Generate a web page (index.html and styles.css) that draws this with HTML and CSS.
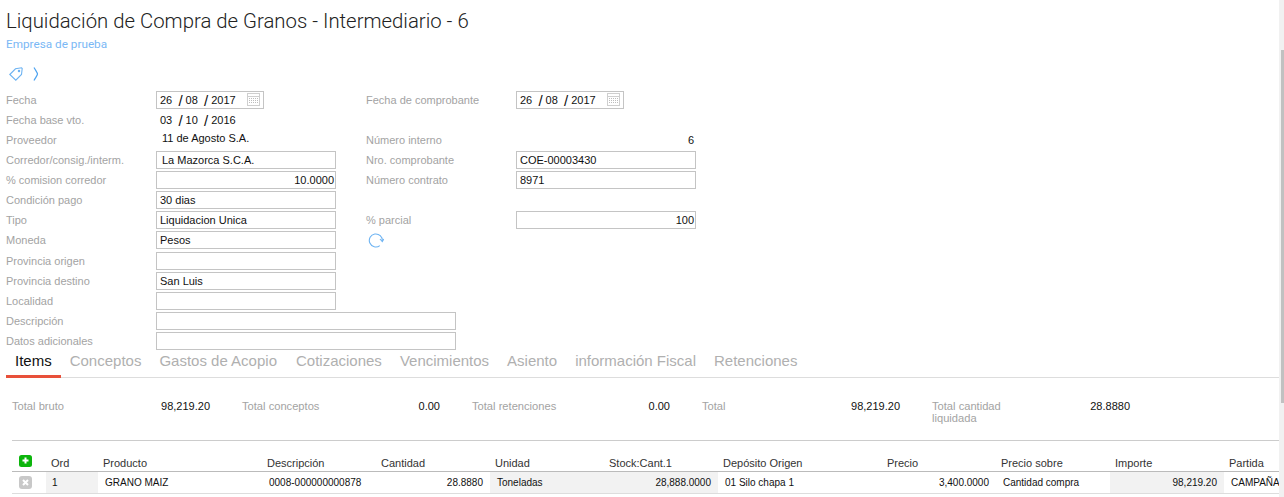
FILE: index.html
```html
<!DOCTYPE html>
<html lang="es">
<head>
<meta charset="utf-8">
<title>Liquidación de Compra de Granos</title>
<link rel="stylesheet" href="styles.css">
</head>
<body>
<div class="page">
  <header class="head">
    <h1 class="title">Liquidación de Compra de Granos - Intermediario - 6</h1>
    <div class="company">Empresa de prueba</div>
    <div class="tools">
      <svg class="ico" width="14" height="14" viewBox="0 0 14 14" fill="none" stroke="#6db3f2" stroke-width="1.1"><path d="M.8 7.500 6.500 1.800 12.500.8 13.200 1.500 12.500 7.500 6.800 13.200Z"/><circle cx="10" cy="4" r=".7"/></svg>
      <svg class="ico" width="6" height="14" viewBox="0 0 6 14" fill="none" stroke="#4da3f0" stroke-width="1.2"><path d="M1 .5C3 4 4.500 6 4.500 7S3 10 1 13.500"/></svg>
    </div>
  </header>
  <section class="form">
    <div class="lbl">Fecha</div>
    <div class="date box"><span>26</span><i>/</i><span>08</span><i>/</i><span>2017</span><svg class="cal" width="13" height="13" viewBox="0 0 13 13"><rect x=".5" y=".5" width="12" height="12" fill="#fff" stroke="#cfcfcf"/><path d="M.5 3.500H12.500" stroke="#cfcfcf"/><path d="M2 5.500h9M2 7.500h9M2 9.500h9" stroke="#bdbdbd" stroke-dasharray="1 1"/></svg></div>
    <div class="lbl c2">Fecha de comprobante</div>
    <div class="date box"><span>26</span><i>/</i><span>08</span><i>/</i><span>2017</span><svg class="cal" width="13" height="13" viewBox="0 0 13 13"><rect x=".5" y=".5" width="12" height="12" fill="#fff" stroke="#cfcfcf"/><path d="M.5 3.500H12.500" stroke="#cfcfcf"/><path d="M2 5.500h9M2 7.500h9M2 9.500h9" stroke="#bdbdbd" stroke-dasharray="1 1"/></svg></div>

    <div class="lbl">Fecha base vto.</div>
    <div class="date plain"><span>03</span><i>/</i><span>10</span><i>/</i><span>2016</span></div>
    <div class="skip"></div>

    <div class="lbl">Proveedor</div>
    <div class="static">11 de Agosto S.A.</div>
    <div class="lbl c2">Número interno</div>
    <div class="num">6</div>

    <div class="lbl">Corredor/consig./interm.</div>
    <div class="box txt ind">La Mazorca S.C.A.</div>
    <div class="lbl c2">Nro. comprobante</div>
    <div class="box txt">COE-00003430</div>

    <div class="lbl">% comision corredor</div>
    <div class="box txt right">10.0000</div>
    <div class="lbl c2">Número contrato</div>
    <div class="box txt">8971</div>

    <div class="lbl">Condición pago</div>
    <div class="box txt">30 dias</div>
    <div class="skip"></div>

    <div class="lbl">Tipo</div>
    <div class="box txt">Liquidacion Unica</div>
    <div class="lbl c2">% parcial</div>
    <div class="box txt right">100</div>

    <div class="lbl">Moneda</div>
    <div class="box txt">Pesos</div>
    <div class="refresh"><svg width="16" height="15" viewBox="0 0 16 15" fill="none" stroke="#6db3f2" stroke-width="1.1"><path d="M11.800 12.600A6.500 6.500 0 1 1 14.300 8"/><path d="M12 6 14.300 8.500 15.900 6"/></svg></div>

    <div class="lbl">Provincia origen</div>
    <div class="box txt"></div>
    <div class="skip"></div>

    <div class="lbl">Provincia destino</div>
    <div class="box txt">San Luis</div>
    <div class="skip"></div>

    <div class="lbl">Localidad</div>
    <div class="box txt"></div>
    <div class="skip"></div>

    <div class="lbl">Descripción</div>
    <div class="box txt wide"></div>

    <div class="lbl">Datos adicionales</div>
    <div class="box txt wide"></div>
  </section>
  <nav class="tabs">
    <span class="tab on">Items</span>
    <span class="tab">Conceptos</span>
    <span class="tab long">Gastos de Acopio</span>
    <span class="tab">Cotizaciones</span>
    <span class="tab">Vencimientos</span>
    <span class="tab">Asiento</span>
    <span class="tab">información Fiscal</span>
    <span class="tab">Retenciones</span>
  </nav>
  <section class="totals">
    <div class="tl">Total bruto</div><div class="tv">98,219.20</div>
    <div class="tl">Total conceptos</div><div class="tv">0.00</div>
    <div class="tl">Total retenciones</div><div class="tv">0.00</div>
    <div class="tl">Total</div><div class="tv">98,219.20</div>
    <div class="tl">Total cantidad liquidada</div><div class="tv">28.8880</div>
  </section>
  <div class="gridwrap">
    <table class="grid">
      <colgroup>
        <col class="c-a"><col class="c-b"><col class="c-c"><col class="c-d"><col class="c-e"><col class="c-e"><col class="c-e"><col class="c-f"><col class="c-e"><col class="c-e"><col class="c-e"><col class="c-e">
      </colgroup>
      <thead>
        <tr>
          <th class="ac"><svg width="13" height="12" viewBox="0 0 13 12"><rect width="13" height="12" rx="2.500" fill="#0cb50c"/><path d="M6.500 2.500v6M3.500 5.500h6" stroke="#fff" stroke-width="2"/></svg></th>
          <th>Ord</th><th>Producto</th><th>Descripción</th><th>Cantidad</th><th>Unidad</th><th>Stock:Cant.1</th><th>Depósito Origen</th><th>Precio</th><th>Precio sobre</th><th>Importe</th><th>Partida</th>
        </tr>
      </thead>
      <tbody>
        <tr>
          <td class="ac"><svg width="13" height="13" viewBox="0 0 13 13"><rect width="13" height="13" rx="3" fill="#c8c8c8"/><path d="M4 4l5 5M9 4l-5 5" stroke="#fff" stroke-width="2"/></svg></td>
          <td class="ro ord">1</td><td>GRANO MAIZ</td><td>0008-000000000878</td><td class="r">28.8880</td><td class="ro">Toneladas</td><td class="r ro">28,888.0000</td><td>01 Silo chapa 1</td><td class="r">3,400.0000</td><td>Cantidad compra</td><td class="r ro">98,219.20</td><td class="clip">CAMPAÑA</td>
        </tr>
      </tbody>
    </table>
  </div>
</div>
<div class="scroll"><div class="thumb"></div></div>
</body>
</html>
```

FILE: styles.css
```css
* { box-sizing: border-box; }
html, body { margin: 0; height: 497px; overflow: hidden; background: #fff; }
body { font-family: "Liberation Sans", Arial, sans-serif; font-size: 11px; color: #111; position: relative; }
.page { padding: 0 5px 0 6px; }
.title { margin: 0; padding-top: 8px; font: 300 20.35px/26px Roboto, sans-serif; color: #222; height: 34px; }
.company { font: 400 11.75px/20px Roboto, sans-serif; color: #7ab8f5; height: 20px; }
.tools { display: flex; align-items: center; gap: 10px; height: 36px; padding: 4px 0 0 3px; }
.form { display: grid; grid-template-columns: 150px 180px 30px 150px 180px; grid-template-rows: repeat(7, 20px) 21px; grid-auto-rows: 20px; align-items: start; }
.lbl { grid-column: 1; font: 400 11px/20px "Liberation Sans", sans-serif; color: #a3a3a3; white-space: nowrap; }
.lbl.c2 { grid-column: 4; }
.skip { grid-column: 3 / span 3; }
.box { border: 1px solid #c4c4c4; height: 18px; margin-top: 1px; background: #fff; }
.txt { font-size: 11px; line-height: 16px; padding: 0 3px; white-space: nowrap; overflow: hidden; }
.ind { padding-left: 5px; }
.right { text-align: right; padding-right: 1px; }
.wide { grid-column: 2 / span 4; width: 300px; }
.date { display: flex; align-items: center; width: 108px; height: 18px; margin-top: 1px; padding-left: 3px; position: relative; }
.date span { display: inline-block; }
.date i { font-style: normal; font-size: 15px; padding: 0 3px 0 6.2px; }
.plain { padding-left: 4px; }
.cal { position: absolute; right: 3px; top: 1px; }
.static { padding-left: 6px; line-height: 20px; margin-top: -2px; }
.num { text-align: right; padding-right: 2px; line-height: 20px; }
.refresh { grid-column: 4 / span 2; height: 15px; padding-left: 2px; margin-top: 3px; line-height: 0; }
.tabs { display: flex; height: 27px; border-bottom: 1px solid #ddd; }
.tab { font-size: 15px; line-height: 19px; color: #b0b0b0; padding: 0 9px; height: 27px; }
.tab.long { padding-right: 10px; }
.tab.on { color: #111; border-bottom: 3px solid #e8503a; }
.totals { display: grid; grid-template-columns: repeat(5, 100px 130px); margin: 22px 0 0 6px; height: 40px; font-size: 11px; }
.tl { font: 400 11.15px/12px "Liberation Sans", sans-serif; color: #a3a3a3; }
.tv { text-align: right; line-height: 12px; padding-right: 32px; }
.gridwrap { border-top: 1px solid #ccc; margin: 0 0 0 6px; padding-top: 12px; overflow: hidden; height: 60px; }
.grid { border-collapse: collapse; table-layout: fixed; width: 1290px; font-size: 10px; }
.c-a { width: 34px; } .c-b { width: 52px; } .c-c { width: 164px; } .c-d { width: 114px; } .c-e { width: 114px; } .c-f { width: 164px; }
.grid th { font-weight: 400; font-size: 11px; text-align: left; padding: 0 5px 2px; height: 18px; border-bottom: 1px solid #bbb; color: #333; vertical-align: bottom; }
.grid td { height: 22px; padding: 0 5px 0 7px; border-bottom: 1px solid #ddd; white-space: nowrap; overflow: hidden; }
.grid th.ac { padding: 2px 0 0 7px; line-height: 0; vertical-align: top; }
.grid td.ac { padding: 0 0 0 7px; line-height: 0; vertical-align: middle; }
.grid td.ord { padding-left: 6px; }
.grid td.r { text-align: right; padding-right: 7px; }
.grid td.ro { background: #f2f2f2; }
.scroll { position: absolute; top: 0; right: 0; width: 5px; height: 497px; background: #f1f1f1; }
.thumb { position: absolute; top: 50px; right: 0; width: 3px; height: 353px; background: #c1c1c1; }
```
